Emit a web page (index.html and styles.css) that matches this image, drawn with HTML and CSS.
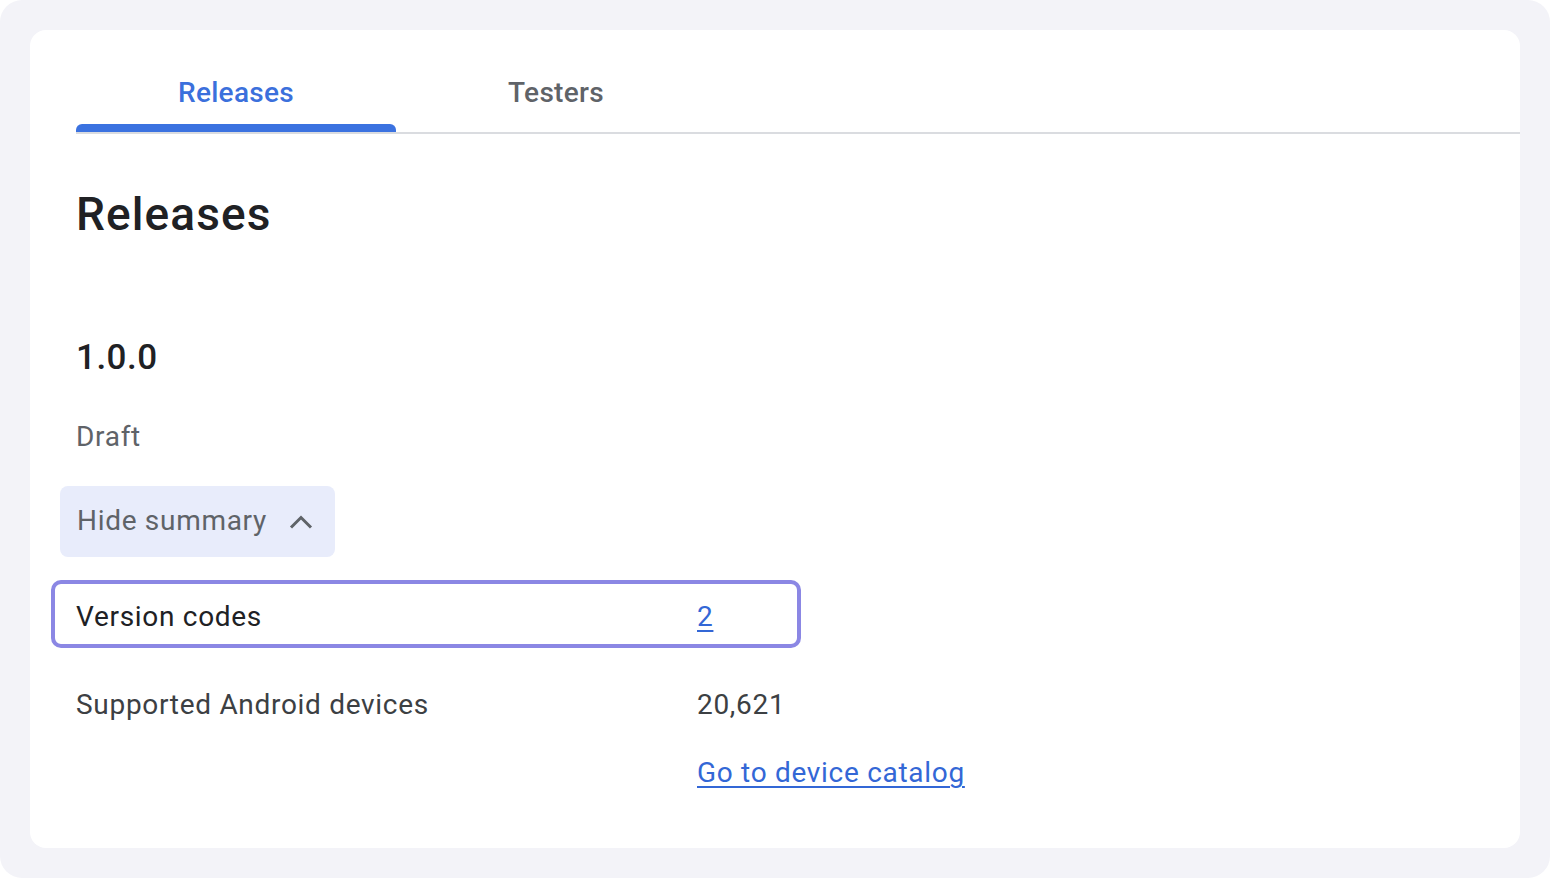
FILE: index.html
```html
<!DOCTYPE html>
<html lang="en">
<head>
<meta charset="utf-8">
<title>Releases</title>
<link rel="stylesheet" href="styles.css">
</head>
<body>
<div class="frame">
  <main class="card">
    <nav class="tabs">
      <div class="tab active">Releases<span class="indicator"></span></div>
      <div class="tab">Testers</div>
    </nav>
    <h1 class="title">Releases</h1>
    <h2 class="version">1.0.0</h2>
    <p class="status">Draft</p>
    <button class="toggle">Hide summary
      <svg class="chev" width="24" height="14" viewBox="0 0 24 14"><path d="M2 12.5 L12 2.5 L22 12.5" fill="none" stroke="#5f6368" stroke-width="3"/></svg>
    </button>
    <div class="row focused">
      <span class="label">Version codes</span>
      <a class="link" href="#">2</a>
    </div>
    <div class="row devices">
      <span class="label">Supported Android devices</span>
      <span class="value">20,621</span>
    </div>
    <div class="row catalog">
      <span class="label"></span>
      <a class="link" href="#">Go to device catalog</a>
    </div>
  </main>
</div>
</body>
</html>
```
FILE: styles.css
```css
html, body {
  margin: 0;
  padding: 0;
  background: #ffffff;
}
body {
  font-family: Roboto, "Noto Sans", Arial, sans-serif;
  color: #202124;
}
.frame {
  width: 1550px;
  height: 878px;
  box-sizing: border-box;
  padding: 30px;
  background: #f3f3f8;
  border-radius: 22px;
}
.card {
  height: 818px;
  box-sizing: border-box;
  background: #ffffff;
  border-radius: 16px;
  padding: 22px 0 0 46px;
}
.tabs {
  display: flex;
  border-bottom: 2px solid #dadce0;
}
.tab {
  position: relative;
  width: 320px;
  height: 80px;
  display: flex;
  align-items: center;
  justify-content: center;
  font-size: 28px;
  font-weight: 500;
  letter-spacing: 0.3px;
  color: #5f6368;
}
.tab.active {
  color: #3b70dc;
}
.indicator {
  position: absolute;
  left: 0;
  right: 0;
  bottom: 0;
  height: 8px;
  background: #3b72e0;
  border-radius: 6px 6px 0 0;
}
.title {
  margin: 52px 0 0;
  font-size: 46px;
  line-height: 56px;
  font-weight: 500;
  letter-spacing: 1.1px;
  color: #202124;
}
.version {
  margin: 94px 0 0;
  font-size: 35px;
  line-height: 44px;
  font-weight: 500;
  letter-spacing: 0.5px;
  color: #202124;
}
.status {
  margin: 39px 0 0;
  font-size: 28px;
  line-height: 36px;
  letter-spacing: 0.7px;
  color: #5f6368;
}
.toggle {
  margin: 31px 0 0 -16px;
  display: flex;
  align-items: center;
  gap: 22px;
  height: 71px;
  box-sizing: border-box;
  padding: 17px 22px 18px 17px;
  border: none;
  border-radius: 8px;
  background: #e8ecfb;
  font-family: inherit;
  font-size: 28px;
  line-height: 36px;
  letter-spacing: 0.7px;
  color: #5f6368;
}
.chev {
  display: block;
  margin-top: 1px;
}
.row {
  display: grid;
  grid-template-columns: 621px auto;
  font-size: 28px;
  line-height: 36px;
  letter-spacing: 0.7px;
  color: #202124;
}
.row.focused {
  margin: 23px 0 0 -25px;
  width: 750px;
  box-sizing: border-box;
  padding: 15px 0 9px 21px;
  border: 4px solid #8b87e4;
  border-radius: 10px;
}
.row.devices {
  margin-top: 39px;
  color: #3c4043;
}
.row.catalog {
  margin-top: 32px;
}
.value {
  color: #3c4043;
}
.link {
  color: #3367d6;
  text-decoration: underline;
  text-underline-offset: 4px;
  text-decoration-thickness: 2px;
}
```
